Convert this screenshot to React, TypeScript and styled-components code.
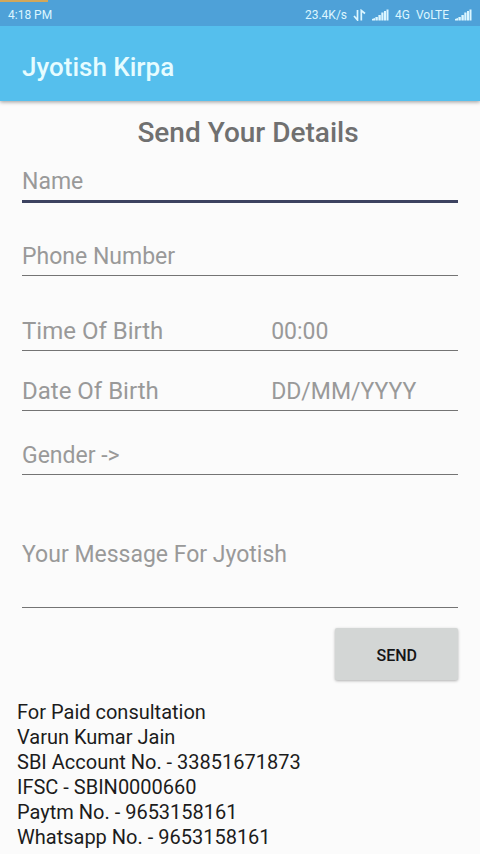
import React from "react";
import styled, { createGlobalStyle } from "styled-components";

const GlobalStyle = createGlobalStyle`
  *, *::before, *::after { box-sizing: border-box; }
  body {
    margin: 0;
    background: #fbfbfb;
    font-family: Roboto, "Liberation Sans", sans-serif;
  }
`;

const Screen = styled.div`
  min-height: 100vh;
  background: #fbfbfb;
`;

const StatusBar = styled.div`
  position: relative;
  display: flex;
  align-items: center;
  justify-content: space-between;
  height: 26px;
  padding: 4px 8px 0;
  background: #4ea1d8;
  color: #dcf6ff;
  font-size: 12px;
  line-height: 16px;
`;

const Progress = styled.span`
  position: absolute;
  top: 0;
  left: 0;
  width: 10%;
  height: 2px;
  background: #d3a75a;
`;

const StatusGroup = styled.div`
  display: flex;
  align-items: center;
  gap: 6px;
`;

const AppBar = styled.header`
  display: flex;
  align-items: center;
  height: 75px;
  padding: 6px 22px 0;
  background: #55bfed;
  box-shadow: 0 1px 4px rgba(0, 0, 0, 0.4);
`;

const Title = styled.h1`
  margin: 0;
  color: #e6fcff;
  font-size: 26px;
  font-weight: 500;
  line-height: 32px;
`;

const Form = styled.form`
  display: flex;
  flex-direction: column;
  padding: 16px 22px 0;
`;

const Heading = styled.h2`
  margin: 0 0 13px;
  padding-left: 16px;
  color: #707070;
  font-size: 28px;
  font-weight: 500;
  line-height: 32px;
  text-align: center;
`;

const Field = styled.div<{ $active?: boolean; $gap?: number }>`
  display: grid;
  grid-template-columns: 4fr 3fr;
  align-items: center;
  margin-bottom: ${(p) => p.$gap ?? 21}px;
  border-bottom: ${(p) => (p.$active ? "3px solid #3c4260" : "1px solid #747474")};
  color: #999999;
  font-size: 23px;
  line-height: 36px;
`;

const FieldLabel = styled.label`
  font-size: 24px;
`;

const TextInput = styled.input<{ $wide?: boolean }>`
  grid-column: ${(p) => (p.$wide ? "1 / -1" : "auto")};
  width: 100%;
  height: 38px;
  padding: 0;
  border: 0;
  outline: 0;
  background: transparent;
  color: #333333;
  font: inherit;

  &::placeholder {
    color: #999999;
    opacity: 1;
  }
`;

const MessageInput = styled.textarea`
  display: block;
  height: 87px;
  margin-bottom: 20px;
  padding: 16px 0 0;
  border: 0;
  border-bottom: 1px solid #747474;
  outline: 0;
  resize: none;
  background: transparent;
  color: #333333;
  font-family: inherit;
  font-size: 23px;
  line-height: 36px;

  &::placeholder {
    color: #999999;
    opacity: 1;
  }
`;

const SendButton = styled.button`
  align-self: flex-end;
  height: 52px;
  padding: 2px 41px 0;
  border: 0;
  border-radius: 2px;
  background: #d3d6d5;
  box-shadow: 0 1px 3px rgba(0, 0, 0, 0.3);
  color: #151515;
  font-family: inherit;
  font-size: 16px;
  font-weight: 500;
`;

const Notes = styled.address`
  padding: 20px 17px 4px;
  color: #1c1c1c;
  font-size: 20px;
  font-style: normal;
  line-height: 25px;
`;

const NoteLine = styled.div``;

const SignalIcon = () => (
  <svg width="17" height="12" viewBox="0 0 17 12" fill="#dcf6ff" aria-hidden="true">
    <path d="M0 11.5V10l3-1v2.500z" />
    <rect x="3.400" y="8" width="2.400" height="3.500" />
    <rect x="6.400" y="6" width="2.400" height="5.500" />
    <rect x="9.300" y="3.500" width="2.200" height="8" />
    <rect x="12" y="2" width="2" height="9.500" />
    <rect x="14.500" y="0.500" width="2" height="11" />
  </svg>
);

const TransferIcon = () => (
  <svg width="13" height="12" viewBox="0 0 13 12" fill="none" stroke="#dcf6ff" strokeWidth="1.700" aria-hidden="true">
    <path d="M4.500 1v10L1 7" />
    <path d="M8.300 11.500V1.500L12 4.500" />
  </svg>
);

const notes = [
  "For Paid consultation",
  "Varun Kumar Jain",
  "SBI Account No. - 33851671873",
  "IFSC - SBIN0000660",
  "Paytm No. - 9653158161",
  "Whatsapp No. - 9653158161",
];

export default function App() {
  return (
    <>
      <GlobalStyle />
      <Screen>
        <StatusBar>
          <Progress />
          <span>4:18 PM</span>
          <StatusGroup>
            <span>23.4K/s</span>
            <TransferIcon />
            <SignalIcon />
            <span>4G</span>
            <span>VoLTE</span>
            <SignalIcon />
          </StatusGroup>
        </StatusBar>
        <AppBar>
          <Title>Jyotish Kirpa</Title>
        </AppBar>
        <main>
          <Form onSubmit={(e: React.FormEvent) => e.preventDefault()}>
            <Heading>Send Your Details</Heading>
            <Field $active $gap={34}>
              <TextInput $wide aria-label="Name" placeholder="Name" />
            </Field>
            <Field $gap={36}>
              <TextInput $wide type="tel" aria-label="Phone Number" placeholder="Phone Number" />
            </Field>
            <Field>
              <FieldLabel htmlFor="birth-time">Time Of Birth</FieldLabel>
              <TextInput id="birth-time" placeholder="00:00" />
            </Field>
            <Field $gap={25}>
              <FieldLabel htmlFor="birth-date">Date Of Birth</FieldLabel>
              <TextInput id="birth-date" placeholder="DD/MM/YYYY" />
            </Field>
            <Field $gap={46}>
              <TextInput $wide aria-label="Gender" placeholder="Gender ->" />
            </Field>
            <MessageInput aria-label="Your Message For Jyotish" placeholder="Your Message For Jyotish" />
            <SendButton type="submit">SEND</SendButton>
          </Form>
          <Notes>
            {notes.map((line) => (
              <NoteLine key={line}>{line}</NoteLine>
            ))}
          </Notes>
        </main>
      </Screen>
    </>
  );
}
